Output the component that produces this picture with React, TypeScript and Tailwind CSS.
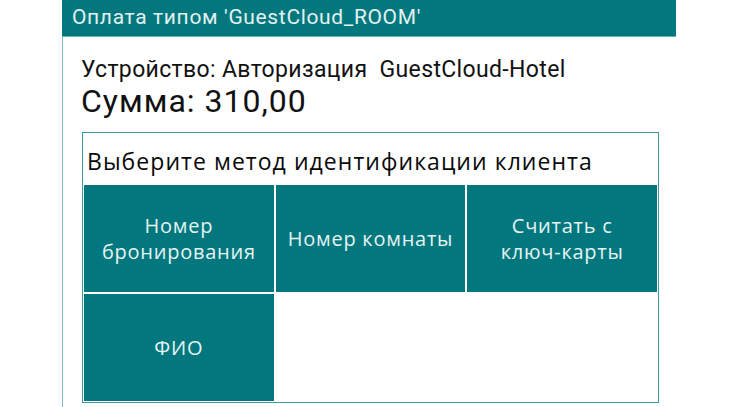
import React from "react";

const teal = "bg-[#02787e]";

function Btn({ children }: { children: React.ReactNode }) {
  return (
    <div className={`${teal} flex items-center justify-center text-center text-[20px] leading-[26px] tracking-[0.75px] text-[#e6f3f3]`} style={{ fontFamily: '"Open Sans", "Noto Sans", sans-serif' }}>
      <span>{children}</span>
    </div>
  );
}

export default function App() {
  return (
    <div className="w-[739px] h-[407px] bg-white overflow-hidden">
      <div className="ml-[62px] w-[614px] h-[407px] flex flex-col">
        <div className={`h-[37px] ${teal} border-b border-[#5fb3b8] flex items-center pl-[10px] text-[21px] tracking-[0.65px] text-[#e3f1f1]`} style={{ fontFamily: '"Roboto", sans-serif' }}>
          Оплата типом 'GuestCloud_ROOM'
        </div>
        <div className="flex-1 border-l border-[#7fb9bd] pl-[18px] pt-[18px]">
          <div className="text-[23px] leading-[30px] tracking-[0.35px] text-[#111]" style={{ fontFamily: '"Roboto", sans-serif' }}>
            Устройство: Авторизация&nbsp; GuestCloud-Hotel
          </div>
          <div className="text-[32px] leading-[36px] tracking-[1px] text-[#111] mt-[-2px]" style={{ fontFamily: '"Roboto", sans-serif' }}>
            Сумма: 310,00
          </div>
          <div className="ml-[1px] mt-[13px] w-[577px] h-[271px] border-[1.5px] border-[#3a9ba1] p-[1px] flex flex-col">
            <div className="h-[51px] flex items-center pl-[3px] pt-[3px] text-[23px] font-medium tracking-[1.05px] text-[#0a0a0a]" style={{ fontFamily: '"Open Sans", "Noto Sans", sans-serif' }}>
              Выберите метод идентификации клиента
            </div>
            <div className="flex-1 grid grid-cols-3 grid-rows-2 gap-[2px]">
              <Btn>Номер<br />бронирования</Btn>
              <Btn>Номер комнаты</Btn>
              <Btn>Считать с<br />ключ-карты</Btn>
              <Btn>ФИО</Btn>
            </div>
          </div>
        </div>
      </div>
    </div>
  );
}
